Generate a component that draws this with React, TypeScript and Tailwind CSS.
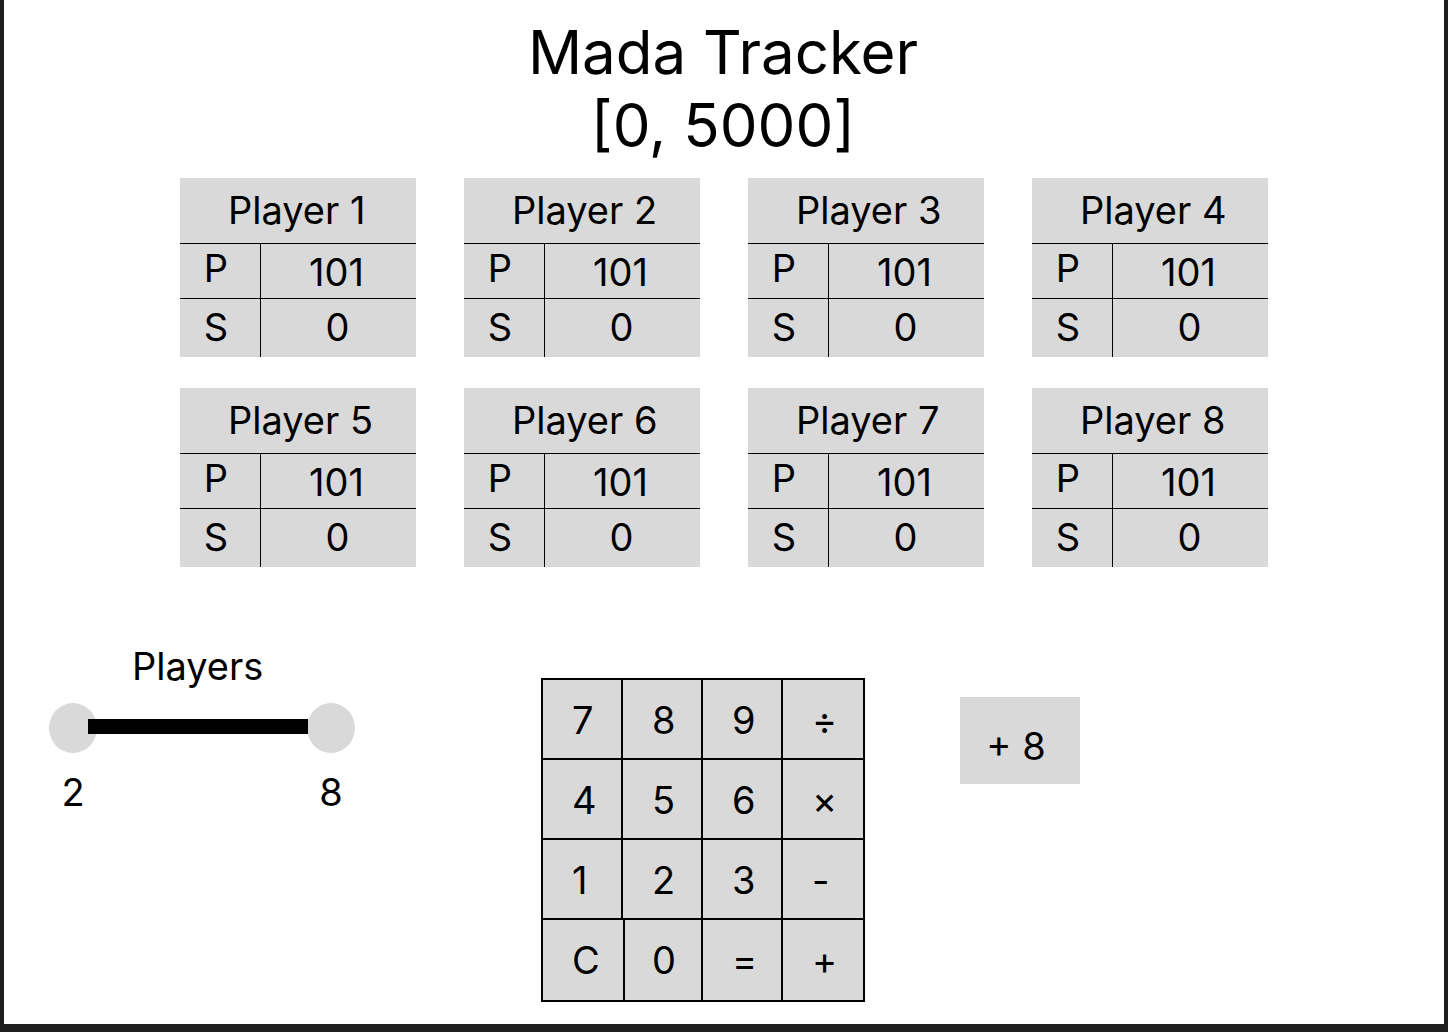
import { useState } from 'react';

type Player = { name: string; points: number; score: number };

const players: Player[] = Array.from({ length: 8 }, (_, i) => ({
  name: `Player ${i + 1}`,
  points: 101,
  score: 0,
}));

const keyRows = [
  ['7', '8', '9', '÷'],
  ['4', '5', '6', '×'],
  ['1', '2', '3', '-'],
  ['C', '0', '=', '+'],
];

const thumbClasses =
  'pointer-events-none absolute inset-0 m-0 h-full w-full appearance-none bg-transparent [&::-webkit-slider-thumb]:pointer-events-auto [&::-webkit-slider-thumb]:h-[50px] [&::-webkit-slider-thumb]:w-12 [&::-webkit-slider-thumb]:appearance-none [&::-webkit-slider-thumb]:rounded-[50%] [&::-webkit-slider-thumb]:bg-[#d9d9d9]';

function PlayerCard({ player }: { player: Player }) {
  return (
    <table className="w-full table-fixed border-separate border-spacing-0 bg-[#d9d9d9]">
      <colgroup>
        <col className="w-[81px]" />
        <col />
      </colgroup>
      <thead>
        <tr>
          <th colSpan={2} scope="colgroup" className="h-[66px] border-b border-black p-0 pb-0.5 pl-12 text-left font-normal">
            {player.name}
          </th>
        </tr>
      </thead>
      <tbody>
        <tr>
          <th scope="row" className="h-[55px] border-r border-b border-black p-0 pr-2 pb-1.5 font-normal">
            P
          </th>
          <td className="border-b border-black p-0 pt-0.5 pr-1 text-center">{player.points}</td>
        </tr>
        <tr>
          <th scope="row" className="h-[58px] border-r border-black p-0 pr-2 pb-0.5 font-normal">
            S
          </th>
          <td className="p-0 pr-0.5 pb-0.5 text-center">{player.score}</td>
        </tr>
      </tbody>
    </table>
  );
}

function PlayersRange() {
  const [min, setMin] = useState(2);
  const [max, setMax] = useState(8);
  return (
    <section className="w-[306px]">
      <h2 className="pl-[83px]">Players</h2>
      <div className="relative mt-3.5 h-[50px]">
        <input
          type="range"
          aria-label="Minimum players"
          min={2}
          max={8}
          value={min}
          onChange={(e) => setMin(Math.min(Number(e.target.value), max))}
          className={thumbClasses}
        />
        <input
          type="range"
          aria-label="Maximum players"
          min={2}
          max={8}
          value={max}
          onChange={(e) => setMax(Math.max(Number(e.target.value), min))}
          className={thumbClasses}
        />
        <div className="pointer-events-none absolute top-4 right-[47px] left-[39px] h-[15px] bg-black" />
      </div>
      <div className="mt-4 flex justify-between">
        <span className="w-12 text-center">{min}</span>
        <span className="w-12 text-center">{max}</span>
      </div>
    </section>
  );
}

function Keypad() {
  return (
    <div className="mt-[35px] w-[324px] border-t-2 border-l-2 border-black bg-[#d9d9d9]">
      {keyRows.map((row, r) => (
        <div
          key={row[0]}
          className={
            r === 3
              ? 'grid h-[82px] grid-cols-[82px_78px_80px_82px]'
              : 'grid h-20 grid-cols-[80px_80px_80px_82px]'
          }
        >
          {row.map((key) => (
            <button
              key={key}
              type="button"
              className={
                key === '0'
                  ? 'border-r-2 border-b-2 border-black pl-[27px] text-left'
                  : r === 3
                    ? 'border-r-2 border-b-2 border-black pl-[29px] text-left'
                    : 'border-r-2 border-b-2 border-black pt-0.5 pl-[29px] text-left'
              }
            >
              {key}
            </button>
          ))}
        </div>
      ))}
    </div>
  );
}

export default function App() {
  return (
    <main className="min-h-screen border-x-4 border-b-8 border-[#1e1e1e] bg-white pt-4 font-['Inter',sans-serif] text-[38px] leading-[46px] text-black">
      <h1 className="pr-0.5 text-center text-[60px] leading-[73px]">
        Mada Tracker
        <br />
        [0, 5000]
      </h1>
      <section className="mx-auto mt-4 grid max-w-[1088px] grid-cols-4 gap-x-12 gap-y-[31px]">
        {players.map((player) => (
          <PlayerCard key={player.name} player={player} />
        ))}
      </section>
      <div className="mt-[76px] flex items-start pl-[45px]">
        <PlayersRange />
        <div className="ml-[186px]">
          <Keypad />
        </div>
        <button type="button" className="mt-[54px] ml-[95px] h-[87px] w-[120px] bg-[#d9d9d9] pt-2.5 pr-2">
          + 8
        </button>
      </div>
    </main>
  );
}
